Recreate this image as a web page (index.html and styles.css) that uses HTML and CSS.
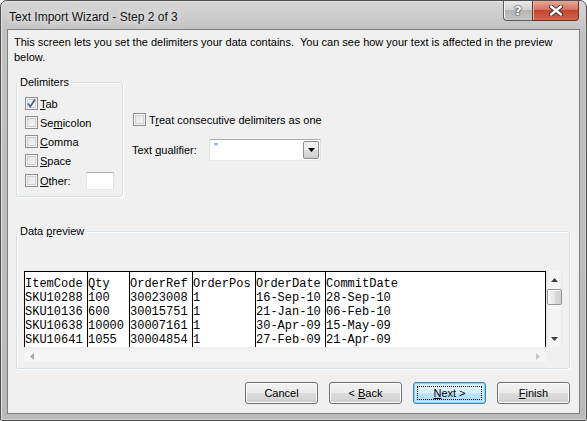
FILE: index.html
```html
<!DOCTYPE html>
<html>
<head>
<meta charset="utf-8">
<link rel="stylesheet" href="styles.css">
</head>
<body>
<div class="window">
  <div class="titlebar">
    <span class="title">Text Import Wizard - Step 2 of 3</span>
    <div class="caption-btns">
      <div class="cbtn help">?</div>
      <div class="cbtn close">
        <svg width="14" height="11" viewBox="0 0 14 11"><path d="M2 1.5 L12 9.5 M12 1.5 L2 9.5" stroke="#3a2a28" stroke-width="4.2" stroke-linecap="round"/><path d="M2 1.5 L12 9.5 M12 1.5 L2 9.5" stroke="#fff" stroke-width="2.4" stroke-linecap="round"/></svg>
      </div>
    </div>
  </div>
  <div class="client">
    <p class="intro">This screen lets you set the delimiters your data contains.&nbsp; You can see how your text is affected in the preview<br>below.</p>
    <div class="options">
      <fieldset class="group delims">
        <legend>Delimiters</legend>
        <label class="chk"><span class="box checked"><svg width="11" height="11" viewBox="0 0 11 11"><path d="M2 5.5 L4.3 8.5 L9 1.5" fill="none" stroke="#4a5f97" stroke-width="1.7"/></svg></span><span><u>T</u>ab</span></label>
        <label class="chk"><span class="box"></span><span>Se<u>m</u>icolon</span></label>
        <label class="chk"><span class="box"></span><span><u>C</u>omma</span></label>
        <label class="chk"><span class="box"></span><span><u>S</u>pace</span></label>
        <label class="chk other"><span class="box"></span><span class="other-label"><u>O</u>ther:</span><span class="textbox"></span></label>
      </fieldset>
      <div class="right-opts">
        <label class="chk"><span class="box"></span><span>T<u>r</u>eat consecutive delimiters as one</span></label>
        <div class="qualifier">
          <span class="q-label">Text <u>q</u>ualifier:</span>
          <div class="combo">
            <span class="combo-val">"</span>
            <span class="combo-btn"><svg width="7" height="4" viewBox="0 0 7 4"><path d="M0 0 H7 L3.5 4 Z" fill="#000"/></svg></span>
          </div>
        </div>
      </div>
    </div>
    <fieldset class="group preview">
      <legend>Data <u>p</u>review</legend>
      <div class="pv">
        <div class="pv-main">
          <div class="grid">
            <div class="col c1"><div>ItemCode</div><div>SKU10288</div><div>SKU10136</div><div>SKU10638</div><div>SKU10641</div></div>
            <div class="col c2"><div>Qty</div><div>100</div><div>600</div><div>10000</div><div>1055</div></div>
            <div class="col c3"><div>OrderRef</div><div>30023008</div><div>30015751</div><div>30007161</div><div>30004854</div></div>
            <div class="col c4"><div>OrderPos</div><div>1</div><div>1</div><div>1</div><div>1</div></div>
            <div class="col c5"><div>OrderDate</div><div>16-Sep-10</div><div>21-Jan-10</div><div>30-Apr-09</div><div>27-Feb-09</div></div>
            <div class="col c6"><div>CommitDate</div><div>28-Sep-10</div><div>06-Feb-10</div><div>15-May-09</div><div>21-Apr-09</div></div>
          </div>
          <div class="vscroll">
            <span class="sarrow"><svg width="7" height="4" viewBox="0 0 7 4"><path d="M3.5 0 L7 4 H0 Z" fill="#3c3c3c"/></svg></span>
            <span class="thumb"></span>
            <span class="vspace"></span>
            <span class="sarrow"><svg width="7" height="4" viewBox="0 0 7 4"><path d="M0 0 H7 L3.5 4 Z" fill="#3c3c3c"/></svg></span>
          </div>
        </div>
        <div class="pv-bottom">
          <div class="hscroll">
            <span class="sarrow"><svg width="4" height="7" viewBox="0 0 4 7"><path d="M4 0 V7 L0 3.5 Z" fill="#a6a6a6"/></svg></span>
            <span class="sarrow"><svg width="4" height="7" viewBox="0 0 4 7"><path d="M0 0 V7 L4 3.5 Z" fill="#c8c8c8"/></svg></span>
          </div>
          <div class="corner"></div>
        </div>
      </div>
    </fieldset>
    <div class="buttons">
      <button class="btn">Cancel</button>
      <button class="btn">&lt; <u>B</u>ack</button>
      <button class="btn default"><span class="focus"><u>N</u>ext &gt;</span></button>
      <button class="btn"><u>F</u>inish</button>
    </div>
  </div>
</div>
</body>
</html>
```

FILE: styles.css
```css
* { box-sizing: border-box; }
html, body { margin: 0; padding: 0; background: #fff; }
body { font-family: "Liberation Sans", Arial, sans-serif; font-size: 11px; color: #000; }

.window {
  width: 587px;
  height: 421px;
  border: 1px solid #4f4f4f;
  border-radius: 7px 7px 2px 2px;
  background: linear-gradient(180deg, #d6d6d6 0px, #c2c2c2 30px, #bababa 100%);
  box-shadow: inset 1px 1px 0 #e4e4e4, inset -1px -1px 0 #d0d0d0;
  padding: 0 6px 6px 6px;
  display: flex;
  flex-direction: column;
}

.titlebar {
  height: 28px;
  display: flex;
  align-items: flex-start;
  justify-content: space-between;
}
.title {
  font-size: 12px;
  color: #141414;
  margin: 9px 0 0 2px;
  text-shadow: 0 0 6px #ececec, 0 0 10px #f2f2f2;
}
.caption-btns { display: flex; margin-right: 1px; }
.cbtn {
  height: 20px;
  border: 1px solid #5e5e5e;
  border-top: none;
  display: flex;
  align-items: center;
  justify-content: center;
}
.help {
  width: 29px;
  border-radius: 0 0 0 4px;
  border-right: none;
  background: linear-gradient(180deg, #eaeaea 0%, #d2d2d2 45%, #b4b4b4 50%, #c6c6c6 100%);
  box-shadow: inset 1px 0 0 #f4f4f4;
  color: #fff;
  font: bold 13px "DejaVu Sans", sans-serif;
  text-shadow: 0 0 1px #333, 0 0 1px #333, 0 0 2px #444;
}
.close {
  width: 47px;
  border-radius: 0 0 4px 0;
  border-color: #6b3328;
  background: linear-gradient(180deg, #e9a897 0%, #d7725f 45%, #c2452e 50%, #d0654c 100%);
  box-shadow: inset 1px 0 0 #f0b5a6;
}

.client {
  flex: 1;
  background: #f0f0f0;
  border: 1px solid #7e7e7e;
  padding: 0 8px 0 0;
  display: flex;
  flex-direction: column;
}

.intro {
  margin: 5px 0 0 6px;
  line-height: 15px;
  white-space: nowrap;
}

.options { display: flex; margin-top: 10px; }

.group {
  margin: 0 0 0 8px;
  border: 1px solid #d5dfe5;
  border-radius: 3px;
  box-shadow: inset 1px 1px 0 #fff, 1px 1px 0 #fff;
  min-width: 0;
}
.group legend {
  padding: 0 2px;
  line-height: 15px;
}

.delims {
  width: 107px;
  padding: 4px 0 5px 8px;
}
.delims legend { margin-left: -7px; }
.chk {
  display: flex;
  align-items: center;
  height: 19px;
}
.box {
  width: 13px;
  height: 13px;
  border: 1px solid #8e8f8f;
  background: linear-gradient(135deg, #dcdcdc 0%, #f0f0f0 60%, #fbfbfb 100%);
  box-shadow: inset 0 0 0 1px #f4f4f4, inset 0 0 0 2px #cfcfcf;
  margin-right: 2px;
  flex: none;
  display: flex;
  align-items: center;
  justify-content: center;
}
.box.checked { background: linear-gradient(135deg, #e2e2e2 0%, #f4f4f4 60%, #ffffff 100%); }
.chk.other { height: 21px; }
.other-label { width: 46px; }
.textbox {
  width: 28px;
  height: 18px;
  background: #fff;
  border: 1px solid #abadb3;
  border-left-color: #e3e9ef;
  border-right-color: #dbdfe6;
  border-bottom-color: #e3e9ef;
}

.right-opts {
  margin-left: 9px;
  padding-top: 35px;
  display: flex;
  flex-direction: column;
}
.right-opts .chk { margin-left: 1px; }
.right-opts .box { margin-right: 3px; }
.qualifier {
  display: flex;
  align-items: center;
  margin-top: 10px;
}
.q-label { width: 77px; }
.combo {
  width: 112px;
  height: 22px;
  background: #fff;
  border: 1px solid #abadb3;
  border-left-color: #e2e3ea;
  border-right-color: #dbdfe6;
  border-bottom-color: #e3e9ef;
  display: flex;
  align-items: stretch;
  justify-content: space-between;
  padding: 1px;
}
.combo-val { color: #2b6cd0; padding-left: 3px; line-height: 13px; font-size: 11px; }
.combo-btn {
  width: 16px;
  border: 1px solid #8c8c8c;
  border-radius: 2px;
  background: linear-gradient(180deg, #f2f2f2 0%, #ebebeb 50%, #dddddd 50%, #cfcfcf 100%);
  display: flex;
  align-items: center;
  justify-content: center;
}

.preview {
  margin-top: 27px;
  margin-right: 1px;
  padding: 32px 6px 4px 7px;
}
.preview legend { margin-left: -6px; }
.pv { display: flex; flex-direction: column; }
.pv-main { display: flex; height: 76px; }
.grid {
  width: 522px;
  background: #fff;
  border: 1px solid #000;
  border-bottom: none;
  display: flex;
  font-family: "Liberation Mono", "Courier New", monospace;
  font-size: 12px;
  line-height: 14px;
  overflow: hidden;
  white-space: nowrap;
}
.col { height: 100%; padding-top: 5px; flex: none; }
.col + .col { border-left: 1px solid #000; }
.c1 { width: 62px; }
.c2 { width: 42px; }
.c3, .c4 { width: 63px; }
.c5 { width: 70px; }
.c6 { flex: 1; }

.vscroll {
  width: 17px;
  background: linear-gradient(90deg, #e6e6e6 0%, #f4f4f4 20%, #f4f4f4 80%, #e9e9e9 100%);
  display: flex;
  flex-direction: column;
  align-items: center;
}
.vscroll .sarrow { height: 17px; display: flex; align-items: center; justify-content: center; }
.thumb {
  width: 15px;
  height: 16px;
  margin-top: 1px;
  border: 1px solid #959595;
  border-radius: 2px;
  background: linear-gradient(90deg, #f3f3f3 0%, #e6e6e6 50%, #d9d9d9 51%, #cfcfcf 100%);
  box-shadow: inset 1px 1px 0 #fff;
}
.vspace { flex: 1; }

.pv-bottom { display: flex; height: 17px; }
.hscroll {
  width: 522px;
  background: linear-gradient(180deg, #ececec 0%, #f4f4f4 20%, #f6f6f6 80%, #eeeeee 100%);
  display: flex;
  justify-content: space-between;
  align-items: center;
  padding: 0 6px 0 6px;
}
.corner { width: 17px; background: #f0f0f0; }

.buttons {
  display: flex;
  justify-content: flex-end;
  gap: 11px;
  margin-top: 13px;
  padding-right: 1px;
}
.btn {
  width: 73px;
  height: 22px;
  font: 11px "Liberation Sans", Arial, sans-serif;
  color: #000;
  border: 1px solid #707070;
  border-radius: 3px;
  background: linear-gradient(180deg, #f2f2f2 0%, #ebebeb 50%, #dddddd 50%, #cfcfcf 100%);
  box-shadow: inset 0 0 0 1px #fcfcfc;
  padding: 0;
}
.btn.default {
  border-color: #3c7fb1;
  box-shadow: inset 0 0 0 1px #8fd4f5, inset 0 0 0 2px #c8ecfb;
  background: linear-gradient(180deg, #eaf6fd 0%, #d9f0fc 50%, #bee6fd 50%, #a7d9f5 100%);
  display: flex;
  align-items: stretch;
  justify-content: stretch;
  padding: 3px;
}
.focus {
  flex: 1;
  border: 1px dotted #000;
  display: flex;
  align-items: center;
  justify-content: center;
}
```
